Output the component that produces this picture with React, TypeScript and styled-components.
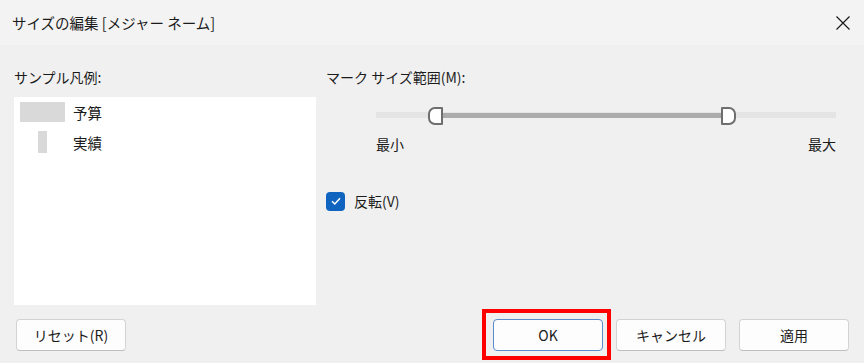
import React from "react";
import styled, { createGlobalStyle } from "styled-components";

const GlobalStyle = createGlobalStyle`
  html, body {
    margin: 0;
    padding: 0;
    background: #f0f0f0;
  }
  body {
    font-family: "Noto Sans CJK JP", "Noto Sans", sans-serif;
    color: #1b1b1b;
  }
`;

const Dialog = styled.div`
  width: 864px;
  height: 363px;
  background: #f0f0f0;
  display: flex;
  flex-direction: column;
  overflow: hidden;
`;

const TitleBar = styled.header`
  height: 45px;
  flex: none;
  background: #f3f3f3;
  display: flex;
  align-items: center;
  justify-content: space-between;
  padding: 0 12px;
  font-size: 14.5px;
`;

const CloseButton = styled.button`
  width: 16px;
  height: 16px;
  border: none;
  padding: 0;
  margin-right: 1px;
  background: transparent;
  display: flex;
`;

const Body = styled.main`
  display: flex;
  padding: 22px 0 0 14px;
  gap: 10px;
`;

const Column = styled.section<{ width: number }>`
  width: ${(p) => p.width}px;
  display: flex;
  flex-direction: column;
`;

const Label = styled.div`
  font-size: 14px;
  line-height: 20px;
  height: 20px;
`;

const LegendBox = styled.div`
  margin-top: 10px;
  height: 208px;
  background: #ffffff;
  padding: 0 6px;
`;

const LegendRow = styled.div`
  height: 30px;
  display: flex;
  align-items: center;
  gap: 8px;
  font-size: 14.5px;
`;

const SwatchCell = styled.div`
  width: 45px;
  display: flex;
  justify-content: center;
`;

const Swatch = styled.div<{ w: number; h: number }>`
  width: ${(p) => p.w}px;
  height: ${(p) => p.h}px;
  background: #d9d9d9;
`;

const SliderArea = styled.div`
  margin: 20px 0 0 50px;
  width: 460px;
`;

const Slider = styled.div`
  position: relative;
  height: 18px;
`;

const Track = styled.div`
  position: absolute;
  left: 0;
  right: 0;
  top: 5px;
  height: 6px;
  background: #e4e4e4;
`;

const Range = styled.div`
  position: absolute;
  top: 6px;
  height: 5px;
  background: #acacac;
`;

const Thumb = styled.div<{ side: "left" | "right" }>`
  position: absolute;
  top: 0;
  width: 15px;
  height: 18px;
  box-sizing: border-box;
  background: #ffffff;
  border: 2px solid #6e6e6e;
  border-radius: ${(p) => (p.side === "left" ? "7px 1px 1px 7px" : "1px 7px 7px 1px")};
`;

const Scale = styled.div`
  margin-top: 9px;
  display: flex;
  justify-content: space-between;
  font-size: 14px;
  line-height: 20px;
`;

const CheckRow = styled.label`
  margin-top: 37px;
  display: flex;
  align-items: center;
  gap: 9px;
  font-size: 14px;
  line-height: 20px;
`;

const CheckBox = styled.span`
  width: 19px;
  height: 19px;
  border-radius: 4px;
  background: #0f64c0;
  display: flex;
  align-items: center;
  justify-content: center;
`;

const Footer = styled.footer`
  display: flex;
  align-items: center;
  padding: 14px 15px 0 16px;
  gap: 13px;
`;

const Spacer = styled.div`
  flex: 1;
`;

const Button = styled.button<{ focused?: boolean; highlighted?: boolean }>`
  position: relative;
  width: 110px;
  height: 32px;
  box-sizing: border-box;
  background: #fdfdfd;
  border: 1px solid ${(p) => (p.focused ? "#5a8ccb" : "#d3d3d3")};
  border-bottom-color: ${(p) => (p.focused ? "#5a8ccb" : "#bdbdbd")};
  border-radius: 4px;
  font-family: "Noto Sans CJK JP", "Noto Sans", sans-serif;
  font-size: 14px;
  color: #1b1b1b;
  padding: 0;

  &::after {
    content: "";
    display: ${(p) => (p.highlighted ? "block" : "none")};
    position: absolute;
    left: -12px;
    right: -9px;
    top: -11px;
    bottom: -10px;
    border: 4px solid #ff0000;
  }
`;

export default function App() {
  return (
    <>
      <GlobalStyle />
      <Dialog>
        <TitleBar>
          <span>サイズの編集 [メジャー ネーム]</span>
          <CloseButton aria-label="閉じる">
            <svg width="16" height="16" viewBox="0 0 16 16">
              <path d="M1.5 1.5 L14.5 14.5 M14.5 1.5 L1.5 14.5" stroke="#1b1b1b" strokeWidth="1.2" />
            </svg>
          </CloseButton>
        </TitleBar>
        <Body>
          <Column width={302}>
            <Label>サンプル凡例:</Label>
            <LegendBox>
              <LegendRow>
                <SwatchCell>
                  <Swatch w={45} h={20} />
                </SwatchCell>
                予算
              </LegendRow>
              <LegendRow>
                <SwatchCell>
                  <Swatch w={9} h={22} />
                </SwatchCell>
                実績
              </LegendRow>
            </LegendBox>
          </Column>
          <Column width={510}>
            <Label>マーク サイズ範囲(M):</Label>
            <SliderArea>
              <Slider>
                <Track />
                <Range style={{ left: 66, width: 280 }} />
                <Thumb side="left" style={{ left: 52 }} />
                <Thumb side="right" style={{ left: 345 }} />
              </Slider>
              <Scale>
                <span>最小</span>
                <span>最大</span>
              </Scale>
            </SliderArea>
            <CheckRow>
              <CheckBox>
                <svg width="12" height="12" viewBox="0 0 12 12">
                  <path d="M2 6.3 L4.8 9 L10 3.3" fill="none" stroke="#ffffff" strokeWidth="1.5" />
                </svg>
              </CheckBox>
              反転(V)
            </CheckRow>
          </Column>
        </Body>
        <Footer>
          <Button>リセット(R)</Button>
          <Spacer />
          <Button focused highlighted>OK</Button>
          <Button>キャンセル</Button>
          <Button>適用</Button>
        </Footer>
      </Dialog>
    </>
  );
}
